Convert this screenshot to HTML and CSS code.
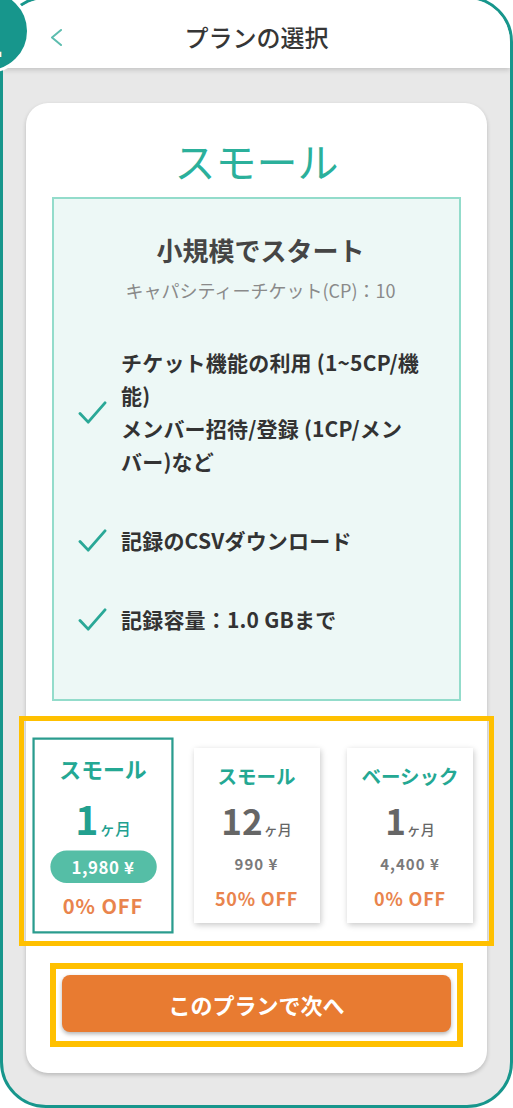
FILE: index.html
```html
<!DOCTYPE html>
<html lang="ja">
<head>
<meta charset="utf-8">
<title>プランの選択</title>
<link rel="stylesheet" href="styles.css">
</head>
<body>
<div class="screen">
  <div class="phone">
    <header class="topbar">
      <span class="back">
        <svg class="back-icon" viewBox="0 0 14 18" width="14" height="18"><polyline points="12,2 3,9.5 12,17" fill="none" stroke="#5dbdaf" stroke-width="2" stroke-linecap="round" stroke-linejoin="round"/></svg>
      </span>
      <h1 class="topbar-title">プランの選択</h1>
      <span class="topbar-spacer"></span>
    </header>
    <main class="content">
      <section class="card">
        <h2 class="plan-name">スモール</h2>
        <div class="features">
          <p class="features-title">小規模でスタート</p>
          <p class="features-sub">キャパシティーチケット(CP)：10</p>
          <ul class="feature-list">
            <li class="feature">
              <svg class="check" viewBox="0 0 30 26"><polyline points="2,14 10.5,23 28,3" fill="none" stroke="#2aa897" stroke-width="3" stroke-linecap="round" stroke-linejoin="round"/></svg>
              <span class="feature-text">チケット機能の利用 (1~5CP/機能)<br>メンバー招待/登録 (1CP/メンバー)など</span>
            </li>
            <li class="feature">
              <svg class="check" viewBox="0 0 30 26"><polyline points="2,14 10.5,23 28,3" fill="none" stroke="#2aa897" stroke-width="3" stroke-linecap="round" stroke-linejoin="round"/></svg>
              <span class="feature-text">記録のCSVダウンロード</span>
            </li>
            <li class="feature">
              <svg class="check" viewBox="0 0 30 26"><polyline points="2,14 10.5,23 28,3" fill="none" stroke="#2aa897" stroke-width="3" stroke-linecap="round" stroke-linejoin="round"/></svg>
              <span class="feature-text">記録容量：1.0 GBまで</span>
            </li>
          </ul>
        </div>
        <div class="plans highlight">
          <div class="plan-card is-selected">
            <p class="plan-title">スモール</p>
            <p class="plan-term"><span class="num">1</span><span class="unit">ヶ月</span></p>
            <p class="plan-price">1,980 ¥</p>
            <p class="plan-off">0% OFF</p>
          </div>
          <div class="plan-card">
            <p class="plan-title">スモール</p>
            <p class="plan-term"><span class="num">12</span><span class="unit">ヶ月</span></p>
            <p class="plan-price">990 ¥</p>
            <p class="plan-off">50% OFF</p>
          </div>
          <div class="plan-card">
            <p class="plan-title">ベーシック</p>
            <p class="plan-term"><span class="num">1</span><span class="unit">ヶ月</span></p>
            <p class="plan-price">4,400 ¥</p>
            <p class="plan-off">0% OFF</p>
          </div>
        </div>
        <div class="cta highlight-strong">
          <button class="cta-button" type="button">このプランで次へ</button>
        </div>
      </section>
    </main>
  </div>
  <div class="step-badge"><span class="step-num">1</span></div>
</div>
</body>
</html>
```
FILE: styles.css
```css
* {
  box-sizing: border-box;
  margin: 0;
  padding: 0;
}

html,
body {
  width: 513px;
  height: 1108px;
  overflow: hidden;
  background: #ffffff;
}

body {
  font-family: "Noto Sans CJK JP", "Noto Sans", sans-serif;
  color: #333333;
}

.screen {
  position: relative;
  width: 513px;
  height: 1108px;
  overflow: hidden;
}

.phone {
  width: 513px;
  height: 1112px;
  margin-top: -4px;
  border: 3px solid #17968c;
  border-radius: 46px;
  overflow: hidden;
  background: #e8e8e8;
  display: flex;
  flex-direction: column;
}

/* header */
.topbar {
  flex: none;
  position: relative;
  z-index: 1;
  height: 69px;
  padding-top: 7px;
  background: #ffffff;
  box-shadow: 0 2px 5px rgba(0, 0, 0, 0.16);
  display: grid;
  grid-template-columns: 1fr auto 1fr;
  align-items: center;
}

.back {
  padding-left: 46px;
  display: flex;
  align-items: center;
}

.back-icon {
  display: block;
}

.topbar-title {
  font-size: 24px;
  font-weight: 500;
  color: #363636;
  line-height: 32px;
}

/* content */
.content {
  flex: 1;
  padding: 35px 23px 0;
}

.card {
  background: #ffffff;
  border-radius: 22px;
  box-shadow: 0 2px 4px rgba(0, 0, 0, 0.2);
  padding: 32px 0 26px;
}

.plan-name {
  font-size: 41px;
  font-weight: 400;
  line-height: 50px;
  color: #2bb09b;
  text-align: center;
}

.features {
  margin: 12px 26px 0;
  border: 2px solid #93dccb;
  background: #edf8f6;
  padding: 33px 16px 63px 24px;
}

.features-title {
  font-size: 26px;
  font-weight: 700;
  line-height: 36px;
  color: #454545;
  text-align: center;
}

.features-sub {
  margin-top: 9px;
  font-size: 18px;
  line-height: 26px;
  color: #8a8a8a;
  text-align: center;
}

.feature-list {
  list-style: none;
  margin-top: 43px;
  display: flex;
  flex-direction: column;
  gap: 46px;
}

.feature {
  display: flex;
  align-items: center;
  gap: 14px;
  font-size: 21px;
  font-weight: 700;
  line-height: 33px;
  color: #333333;
}

.feature-text {
  line-break: strict;
  letter-spacing: 0.2px;
}

.check {
  flex: none;
  width: 29px;
  height: 25px;
}

/* plan selector */
.plans {
  margin: 15px -7px 0;
  padding: 27px 16px 18px;
  display: flex;
  justify-content: space-between;
  align-items: center;
}

.highlight {
  border: 5px solid #ffc000;
}

.highlight-strong {
  border: 6px solid #ffc000;
}

.plan-card {
  width: 126px;
  height: 175px;
  background: #ffffff;
  border: 2px solid transparent;
  box-shadow: 1px 2px 6px rgba(0, 0, 0, 0.22);
  padding-top: 13px;
  display: flex;
  flex-direction: column;
  align-items: center;
  text-align: center;
}

.plan-card.is-selected {
  transform: scale(1.12);
  border-color: #2a9c8e;
  box-shadow: none;
}

.plan-title {
  font-size: 19.5px;
  font-weight: 700;
  line-height: 26px;
  color: #24a893;
  white-space: nowrap;
}

.plan-term {
  margin-top: 11px;
  line-height: 40px;
  height: 40px;
  color: #666666;
  white-space: nowrap;
}

.plan-term .num {
  font-size: 35px;
  font-weight: 700;
}

.plan-term .unit {
  font-size: 14px;
  font-weight: 500;
  margin-left: 1px;
}

.is-selected .plan-term {
  color: #22a08f;
}

.plan-price {
  margin-top: 9px;
  height: 29px;
  line-height: 29px;
  font-size: 15px;
  font-weight: 700;
  color: #7a7a7a;
  letter-spacing: 1px;
  white-space: nowrap;
}

.is-selected .plan-price {
  width: 95px;
  border-radius: 15px;
  background: #55bea6;
  color: #ffffff;
  letter-spacing: 0.5px;
}

.plan-off {
  margin-top: 8px;
  font-size: 18px;
  font-weight: 700;
  line-height: 24px;
  color: #e9844d;
  letter-spacing: 0.8px;
  white-space: nowrap;
}

/* call to action */
.cta {
  margin: 17px 24px 0;
  padding: 6px 6px 9px;
}

.cta-button {
  display: block;
  width: 100%;
  height: 57px;
  border: none;
  border-radius: 8px;
  background: #e87b31;
  color: #ffffff;
  font-family: inherit;
  font-size: 22px;
  font-weight: 700;
  box-shadow: 0 2px 4px rgba(0, 0, 0, 0.3);
}

/* step badge overlaying the frame corner */
.step-badge {
  position: absolute;
  left: -54px;
  top: -11px;
  width: 84px;
  height: 84px;
  border-radius: 50%;
  background: #17968c;
  border: 3px solid #ffffff;
  z-index: 2;
}

.step-num {
  position: absolute;
  left: 27px;
  top: 31px;
  font-family: "DejaVu Sans", sans-serif;
  font-size: 40px;
  font-weight: 700;
  line-height: 40px;
  color: #ffffff;
}
```
